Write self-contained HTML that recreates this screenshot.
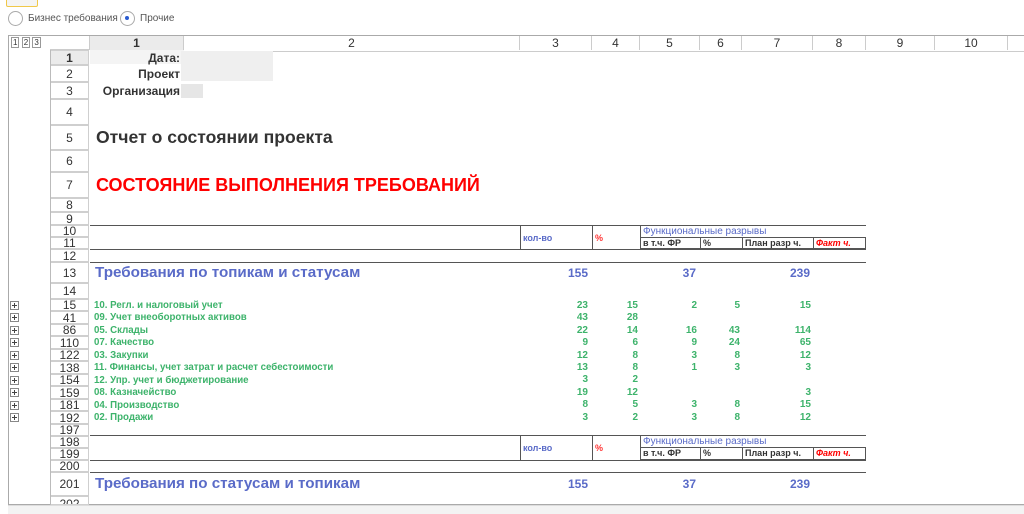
<!DOCTYPE html>
<html><head><meta charset="utf-8"><style>
body{margin:0;width:1024px;height:513px;overflow:hidden;background:#fff;font-family:"Liberation Sans",Arial,sans-serif;position:relative}
.a{position:absolute}
.rh{position:absolute;left:51px;width:38px;border:1px solid #cfcfcf;border-left:none;box-sizing:border-box;background:#fff;font-size:12px;color:#333;text-align:center;display:flex;align-items:center;justify-content:center}
.ch{position:absolute;top:36px;height:14px;border-right:1px solid #ccc;box-sizing:border-box;font-size:12px;color:#333;text-align:center;line-height:14px}
.g{color:#3db36b;font-size:9.7px;font-weight:bold}
.n{position:absolute;text-align:right;font-size:10px;font-weight:bold;color:#3db36b}
.hl{position:absolute;height:1px;background:#555}
.pl{position:absolute;left:10px;width:9px;height:9px;border:1px solid #888;box-sizing:border-box;background:#fff}
.pl:before{content:"";position:absolute;left:1px;right:1px;top:3px;height:1px;background:#444}
.pl:after{content:"";position:absolute;top:1px;bottom:1px;left:3px;width:1px;background:#444}
.b{color:#5a6bc8;font-weight:bold}
</style></head><body>
<div class="a" style="left:6px;top:-8px;width:30px;height:13px;border:1px solid #f0c84a;border-radius:2px;background:#f4f4f4"></div>
<div class="a" style="left:8px;top:11px;width:13px;height:13px;border:1px solid #aaa;border-radius:50%"></div>
<div class="a" style="left:28px;top:13px;font-size:10px;color:#555">Бизнес требования</div>
<div class="a" style="left:120px;top:11px;width:13px;height:13px;border:1px solid #aaa;border-radius:50%"></div>
<div class="a" style="left:125px;top:16px;width:4px;height:4px;background:#2a5bd0;border-radius:50%"></div>
<div class="a" style="left:140px;top:13px;font-size:10px;color:#555">Прочие</div>

<div class="a" style="left:8px;top:35px;width:1020px;height:470px;border:1px solid #aaa;box-sizing:border-box"></div>
<div class="a" style="left:8px;top:505px;width:1016px;height:8px;background:#f3f3f3;border-top:1px solid #ddd"></div>
<div class="a" style="left:11px;top:38px;font-size:8px;color:#333">
<span style="border:1px solid #999;padding:0 1px">1</span> <span style="border:1px solid #999;padding:0 1px">2</span> <span style="border:1px solid #999;padding:0 1px">3</span></div>
<div class="a" style="left:9px;top:50px;width:41px;height:455px;border-right:1px solid #bbb"></div>
<div class="a" style="left:50px;top:36px;width:40px;height:14px;border-right:1px solid #ccc;border-bottom:1px solid #ccc;box-sizing:border-box"></div>
<div class="a" style="left:90px;top:36px;width:940px;height:15px;border-bottom:1px solid #ccc"></div>
<div class="ch" style="left:90px;width:94px;background:#ebebeb;font-weight:bold">1</div>
<div class="ch" style="left:184px;width:336px">2</div>
<div class="ch" style="left:520px;width:72px">3</div>
<div class="ch" style="left:592px;width:48px">4</div>
<div class="ch" style="left:640px;width:60px">5</div>
<div class="ch" style="left:700px;width:42px">6</div>
<div class="ch" style="left:742px;width:71px">7</div>
<div class="ch" style="left:813px;width:53px">8</div>
<div class="ch" style="left:866px;width:69px">9</div>
<div class="ch" style="left:935px;width:73px">10</div>
<div class="ch" style="left:1008px;width:20px"></div>

<div class="rh" style="top:50px;height:15px;background:#ebebeb;font-weight:bold">1</div>
<div class="a" style="left:90px;top:50px;width:94px;height:14px;background:#f4f4f4"></div>
<div class="rh" style="top:65px;height:17px">2</div>
<div class="rh" style="top:82px;height:17px">3</div>
<div class="rh" style="top:99px;height:26px">4</div>
<div class="rh" style="top:125px;height:25px">5</div>
<div class="rh" style="top:150px;height:22px">6</div>
<div class="rh" style="top:172px;height:26px">7</div>
<div class="rh" style="top:198px;height:14px">8</div>
<div class="rh" style="top:212px;height:13px">9</div>
<div class="rh" style="top:225px;height:12px">10</div>
<div class="rh" style="top:237px;height:12px">11</div>
<div class="rh" style="top:249px;height:13px">12</div>
<div class="rh" style="top:262px;height:21px">13</div>
<div class="rh" style="top:283px;height:16px">14</div>
<div class="rh" style="top:299px;height:12px">15</div>
<div class="rh" style="top:311px;height:13px">41</div>
<div class="rh" style="top:324px;height:12px">86</div>
<div class="rh" style="top:336px;height:13px">110</div>
<div class="rh" style="top:349px;height:12px">122</div>
<div class="rh" style="top:361px;height:13px">138</div>
<div class="rh" style="top:374px;height:12px">154</div>
<div class="rh" style="top:386px;height:13px">159</div>
<div class="rh" style="top:399px;height:12px">181</div>
<div class="rh" style="top:411px;height:13px">192</div>
<div class="rh" style="top:424px;height:12px">197</div>
<div class="rh" style="top:436px;height:12px">198</div>
<div class="rh" style="top:448px;height:12px">199</div>
<div class="rh" style="top:460px;height:12px">200</div>
<div class="rh" style="top:472px;height:24px">201</div>
<div class="rh" style="top:496px;height:9px;overflow:hidden;align-items:flex-start">202</div>

<div class="a" style="left:90px;top:51px;width:90px;text-align:right;font-size:12px;font-weight:bold;color:#333">Дата:</div>
<div class="a" style="left:90px;top:67px;width:90px;text-align:right;font-size:12px;font-weight:bold;color:#333">Проект</div>
<div class="a" style="left:90px;top:84px;width:90px;text-align:right;font-size:12px;font-weight:bold;color:#333">Организация</div>
<div class="a" style="left:181px;top:51px;width:92px;height:30px;background:#efefef"></div>
<div class="a" style="left:181px;top:84px;width:22px;height:14px;background:#e6e6e6"></div>
<div class="a" style="left:96px;top:127px;font-size:17.6px;font-weight:bold;color:#333">Отчет о состоянии проекта</div>
<div class="a" style="left:96px;top:175px;font-size:18px;font-weight:bold;color:#f00">СОСТОЯНИЕ ВЫПОЛНЕНИЯ ТРЕБОВАНИЙ</div>

<div class="hl" style="left:90px;top:225px;width:776px"></div>
<div class="hl" style="left:90px;top:249px;width:776px"></div>
<div class="hl" style="left:90px;top:262px;width:776px"></div>
<div class="a" style="left:520px;top:225px;width:1px;height:24px;background:#555"></div>
<div class="a" style="left:592px;top:225px;width:1px;height:24px;background:#555"></div>
<div class="a" style="left:640px;top:225px;width:1px;height:24px;background:#555"></div>
<div class="a" style="left:640px;top:237px;width:226px;height:12px;border:1px solid #555;box-sizing:border-box"></div>
<div class="a" style="left:700px;top:237px;width:1px;height:12px;background:#555"></div>
<div class="a" style="left:742px;top:237px;width:1px;height:12px;background:#555"></div>
<div class="a" style="left:813px;top:237px;width:1px;height:12px;background:#555"></div>
<div class="a b" style="left:523px;top:233px;font-size:9px">кол-во</div>
<div class="a" style="left:595px;top:233px;font-size:9px;color:#f33;font-weight:bold">%</div>
<div class="a" style="left:643px;top:226px;font-size:10px;color:#5a6bc8">Функциональные разрывы</div>
<div class="a" style="left:643px;top:238px;font-size:9px;font-weight:bold;color:#333">в т.ч. ФР</div>
<div class="a" style="left:703px;top:238px;font-size:9px;font-weight:bold;color:#333">%</div>
<div class="a" style="left:745px;top:238px;font-size:9px;font-weight:bold;color:#333">План разр ч.</div>
<div class="a" style="left:816px;top:238px;font-size:9px;font-weight:bold;font-style:italic;color:#f00">Факт ч.</div>

<div class="a b" style="left:95px;top:264px;font-size:15.2px">Требования по топикам и статусам</div>
<div class="a b" style="left:520px;top:266px;width:68px;text-align:right;font-size:12px">155</div>
<div class="a b" style="left:640px;top:266px;width:56px;text-align:right;font-size:12px">37</div>
<div class="a b" style="left:742px;top:266px;width:68px;text-align:right;font-size:12px">239</div>

<div class="a g" style="left:94px;top:300px">10. Регл. и налоговый учет</div>
<div class="a g" style="left:94px;top:312px">09. Учет внеоборотных активов</div>
<div class="a g" style="left:94px;top:325px">05. Склады</div>
<div class="a g" style="left:94px;top:337px">07. Качество</div>
<div class="a g" style="left:94px;top:350px">03. Закупки</div>
<div class="a g" style="left:94px;top:362px">11. Финансы, учет затрат и расчет себестоимости</div>
<div class="a g" style="left:94px;top:375px">12. Упр. учет и бюджетирование</div>
<div class="a g" style="left:94px;top:387px">08. Казначейство</div>
<div class="a g" style="left:94px;top:400px">04. Производство</div>
<div class="a g" style="left:94px;top:412px">02. Продажи</div>

<div class="pl" style="top:301px"></div><div class="pl" style="top:313px"></div><div class="pl" style="top:326px"></div><div class="pl" style="top:338px"></div><div class="pl" style="top:351px"></div><div class="pl" style="top:363px"></div><div class="pl" style="top:376px"></div><div class="pl" style="top:388px"></div><div class="pl" style="top:401px"></div><div class="pl" style="top:413px"></div>

<div class="n" style="left:540px;width:48px;top:300px;line-height:12.4px">23<br>43<br>22<br>9<br>12<br>13<br>3<br>19<br>8<br>3</div>
<div class="n" style="left:600px;width:38px;top:300px;line-height:12.4px">15<br>28<br>14<br>6<br>8<br>8<br>2<br>12<br>5<br>2</div>
<div class="n" style="left:650px;width:47px;top:300px;line-height:12.4px">2<br>&nbsp;<br>16<br>9<br>3<br>1<br>&nbsp;<br>&nbsp;<br>3<br>3</div>
<div class="n" style="left:705px;width:35px;top:300px;line-height:12.4px">5<br>&nbsp;<br>43<br>24<br>8<br>3<br>&nbsp;<br>&nbsp;<br>8<br>8</div>
<div class="n" style="left:760px;width:51px;top:300px;line-height:12.4px">15<br>&nbsp;<br>114<br>65<br>12<br>3<br>&nbsp;<br>3<br>15<br>12</div>

<div class="hl" style="left:90px;top:435px;width:776px"></div>
<div class="hl" style="left:90px;top:460px;width:776px"></div>
<div class="hl" style="left:90px;top:472px;width:776px"></div>
<div class="a" style="left:520px;top:435px;width:1px;height:25px;background:#555"></div>
<div class="a" style="left:592px;top:435px;width:1px;height:25px;background:#555"></div>
<div class="a" style="left:640px;top:435px;width:1px;height:25px;background:#555"></div>
<div class="a" style="left:640px;top:447px;width:226px;height:13px;border:1px solid #555;box-sizing:border-box"></div>
<div class="a" style="left:700px;top:447px;width:1px;height:13px;background:#555"></div>
<div class="a" style="left:742px;top:447px;width:1px;height:13px;background:#555"></div>
<div class="a" style="left:813px;top:447px;width:1px;height:13px;background:#555"></div>
<div class="a b" style="left:523px;top:443px;font-size:9px">кол-во</div>
<div class="a" style="left:595px;top:443px;font-size:9px;color:#f33;font-weight:bold">%</div>
<div class="a" style="left:643px;top:436px;font-size:10px;color:#5a6bc8">Функциональные разрывы</div>
<div class="a" style="left:643px;top:448px;font-size:9px;font-weight:bold;color:#333">в т.ч. ФР</div>
<div class="a" style="left:703px;top:448px;font-size:9px;font-weight:bold;color:#333">%</div>
<div class="a" style="left:745px;top:448px;font-size:9px;font-weight:bold;color:#333">План разр ч.</div>
<div class="a" style="left:816px;top:448px;font-size:9px;font-weight:bold;font-style:italic;color:#f00">Факт ч.</div>

<div class="a b" style="left:95px;top:475px;font-size:15.2px">Требования по статусам и топикам</div>
<div class="a b" style="left:520px;top:477px;width:68px;text-align:right;font-size:12px">155</div>
<div class="a b" style="left:640px;top:477px;width:56px;text-align:right;font-size:12px">37</div>
<div class="a b" style="left:742px;top:477px;width:68px;text-align:right;font-size:12px">239</div>
</body></html>
